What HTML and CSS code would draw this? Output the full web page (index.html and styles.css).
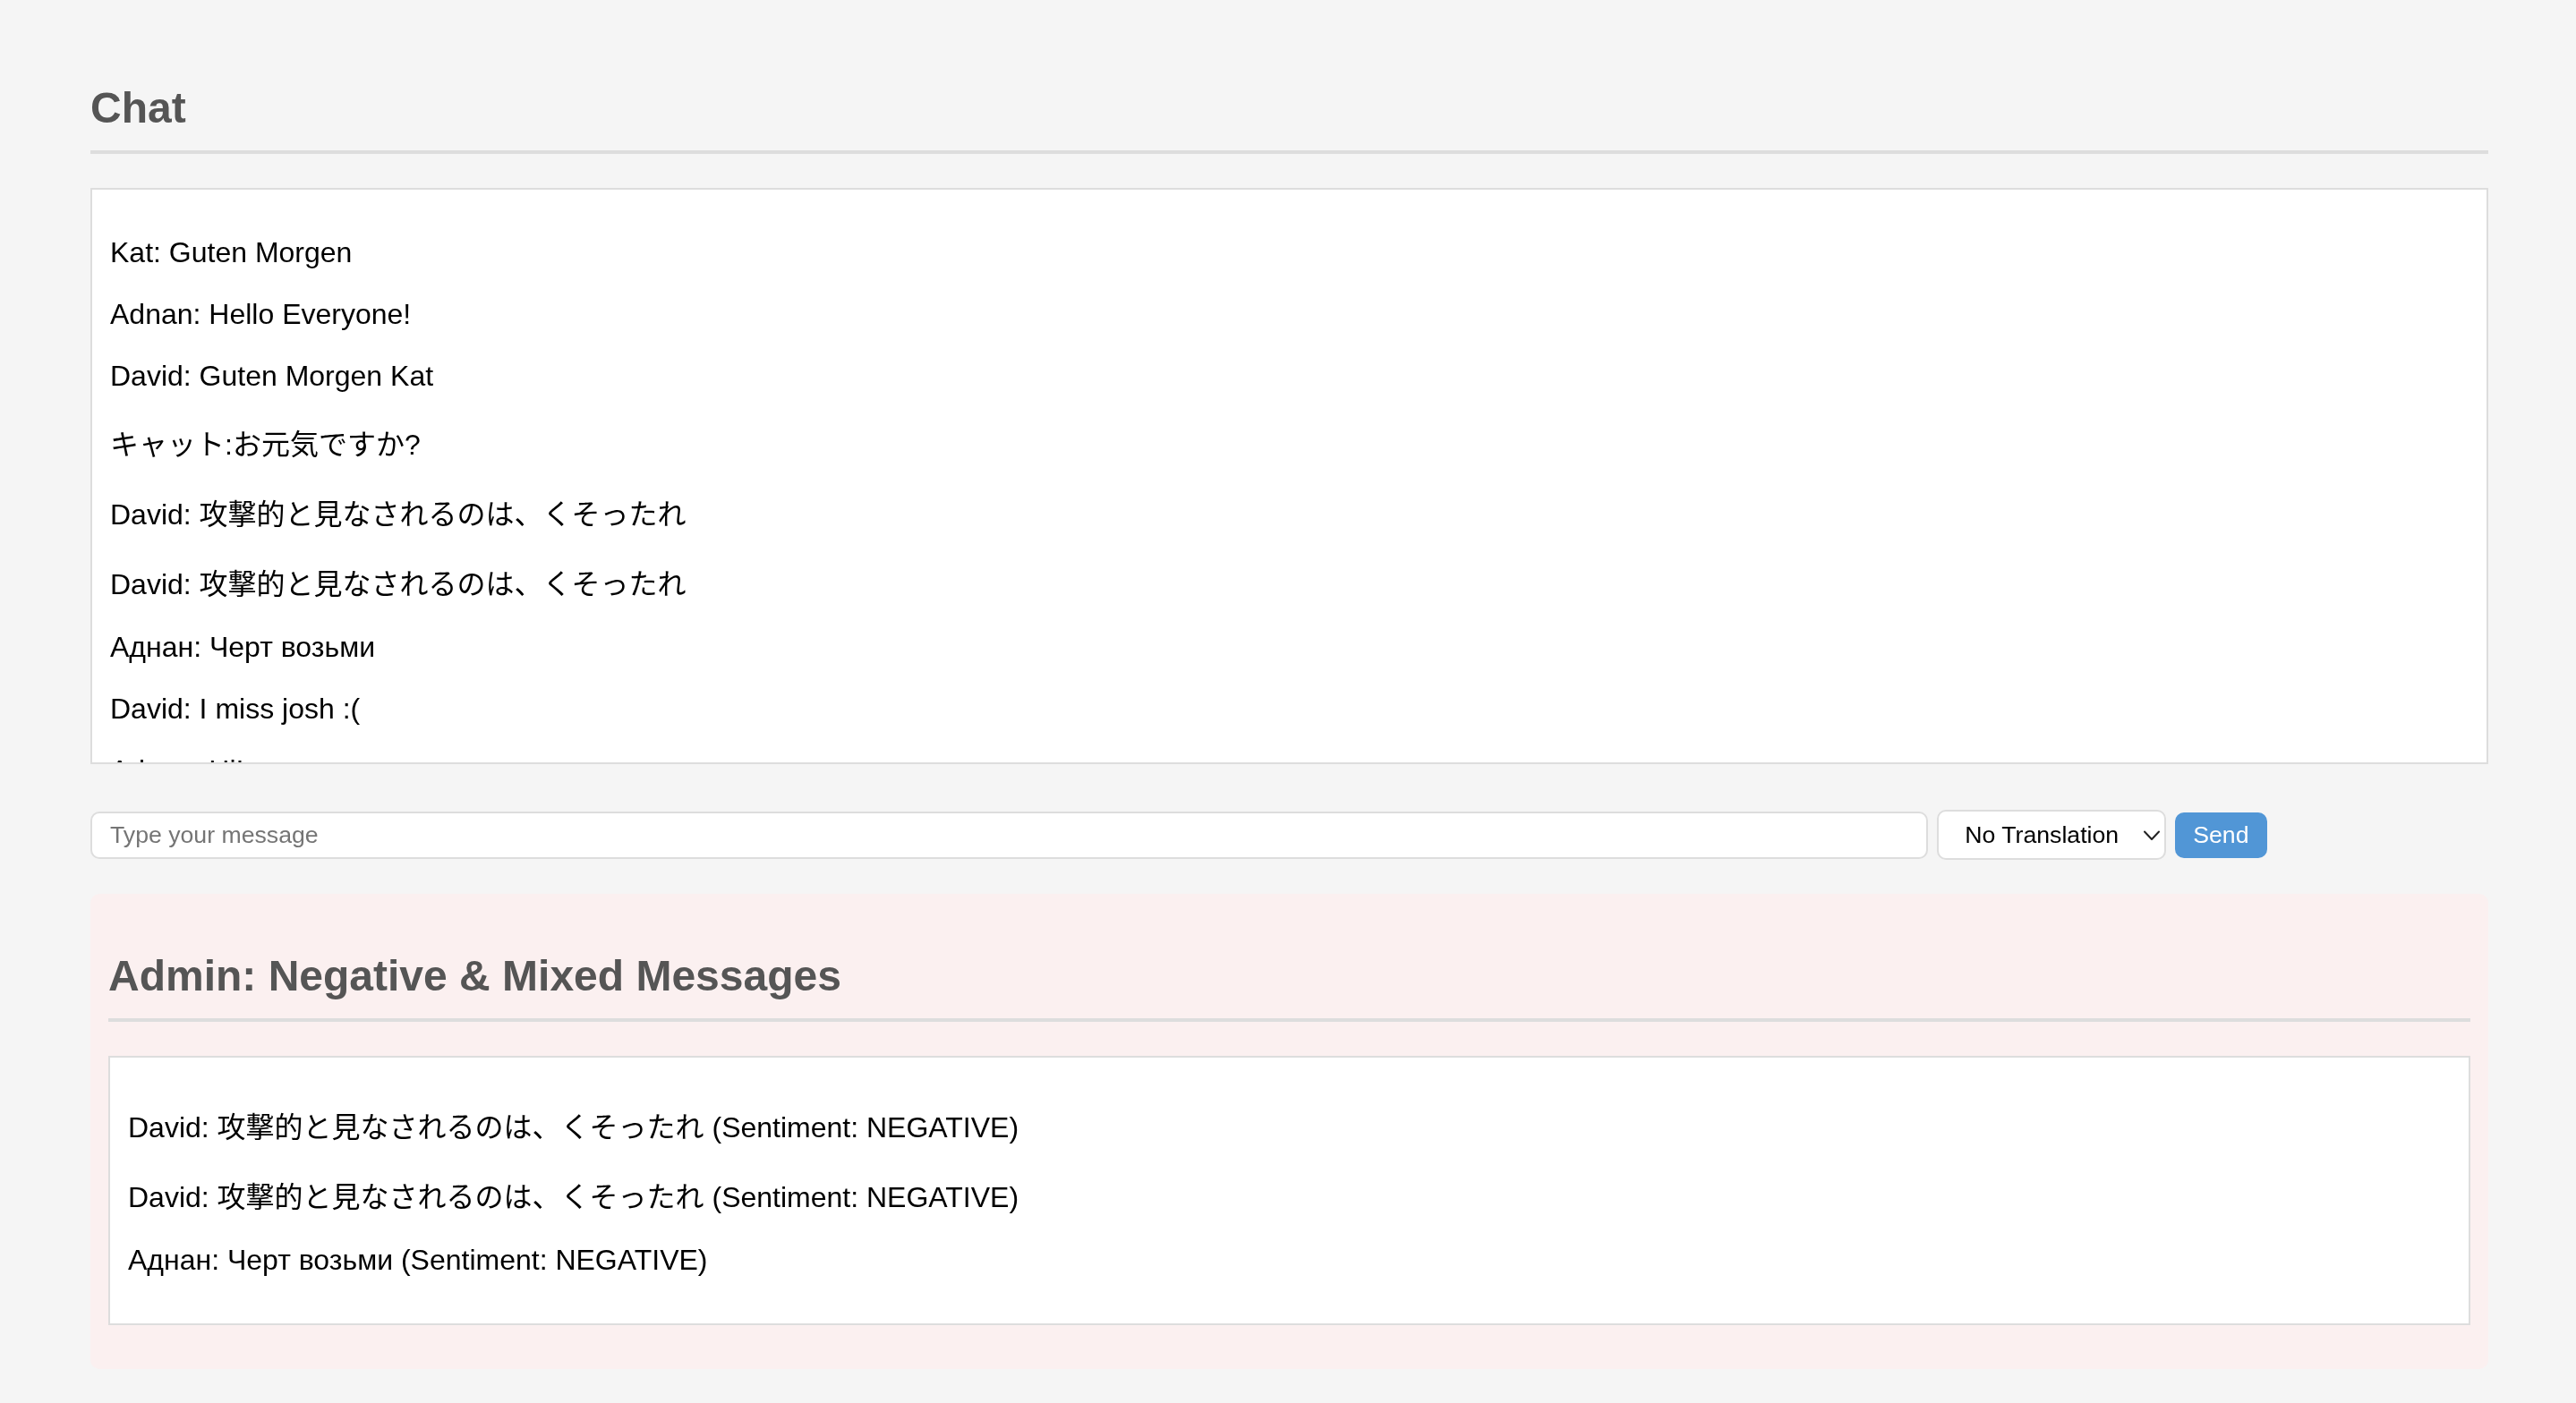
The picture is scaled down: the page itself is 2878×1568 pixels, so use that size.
FILE: index.html
```html
<!DOCTYPE html>
<html lang="en">
<head>
<meta charset="utf-8">
<title>Chat</title>
<link rel="stylesheet" href="styles.css">
</head>
<body>
  <main class="page">
    <h2 class="section-title">Chat</h2>
    <div class="chat-box">
      <p>Kat: Guten Morgen</p>
      <p>Adnan: Hello Everyone!</p>
      <p>David: Guten Morgen Kat</p>
      <p>キャット:お元気ですか?</p>
      <p>David: 攻撃的と見なされるのは、くそったれ</p>
      <p>David: 攻撃的と見なされるのは、くそったれ</p>
      <p>Аднан: Черт возьми</p>
      <p>David: I miss josh :(</p>
      <p>Adnan: Hi!</p>
    </div>

    <div class="composer">
      <input class="message-input" type="text" placeholder="Type your message">
      <div class="select-wrap">
        <select class="lang-select">
          <option>No Translation</option>
          <option>English</option>
          <option>German</option>
          <option>Japanese</option>
          <option>Russian</option>
        </select>
        <svg class="select-chevron" width="18" height="12" viewBox="0 0 18 12" aria-hidden="true">
          <path d="M1 1.5 L9 10 L17 1.5" fill="none" stroke="#222" stroke-width="2" stroke-linecap="round" stroke-linejoin="round"/>
        </svg>
      </div>
      <button class="send-btn" type="button">Send</button>
    </div>

    <section class="admin">
      <h2 class="section-title">Admin: Negative &amp; Mixed Messages</h2>
      <div class="admin-box">
        <p>David: 攻撃的と見なされるのは、くそったれ (Sentiment: NEGATIVE)</p>
        <p>David: 攻撃的と見なされるのは、くそったれ (Sentiment: NEGATIVE)</p>
        <p>Аднан: Черт возьми (Sentiment: NEGATIVE)</p>
      </div>
    </section>
  </main>
</body>
</html>
```

FILE: styles.css
```css
html, body {
  margin: 0;
  padding: 0;
  background: #f5f5f5;
}

body {
  font-family: "Liberation Sans", "Noto Sans CJK JP", Arial, sans-serif;
  font-size: 32px;
  color: #000;
}

.page {
  padding: 93px 98px 36px 101px;
}

.section-title {
  margin: 0 0 38px 0;
  padding-bottom: 20px;
  border-bottom: 4px solid #ddd;
  font-size: 48px;
  font-weight: bold;
  color: #555;
  line-height: normal;
}

.chat-box {
  height: 600px;
  padding: 20px;
  background: #fff;
  border: 2px solid #ddd;
  overflow-y: auto;
  scrollbar-width: none;
}

.chat-box::-webkit-scrollbar {
  display: none;
}

.chat-box p,
.admin-box p {
  margin: 32px 0;
  line-height: normal;
}

.composer {
  display: flex;
  align-items: center;
  gap: 10px;
  margin-top: 51px;
}

.message-input {
  width: 75%;
  height: 49px;
  padding: 0 20px;
  border: 2px solid #ddd;
  border-radius: 10px;
  background: #fff;
  font-family: "Liberation Sans", Arial, sans-serif;
  font-size: 26.67px;
  color: #000;
  outline: none;
  flex: none;
}

.message-input::placeholder {
  color: #757575;
}

.select-wrap {
  position: relative;
  flex: none;
}

.lang-select {
  display: block;
  width: 256px;
  height: 56px;
  padding: 0 40px 0 29px;
  border: 2px solid #ddd;
  border-radius: 10px;
  background: #fff;
  font-family: "Liberation Sans", Arial, sans-serif;
  font-size: 26.67px;
  color: #000;
  -webkit-appearance: none;
  appearance: none;
  outline: none;
}

.select-chevron {
  position: absolute;
  right: 7px;
  top: 23px;
  pointer-events: none;
}

.send-btn {
  flex: none;
  height: 51px;
  padding: 0 20px;
  border: none;
  border-radius: 10px;
  background: #5196d6;
  color: #fff;
  font-family: "Liberation Sans", Arial, sans-serif;
  font-size: 26.67px;
  cursor: pointer;
}

.admin {
  margin-top: 38px;
  padding: 20px 20px 49px 20px;
  background: #fbf0f0;
  border-radius: 10px;
}

.admin .section-title {
  margin-top: 44px;
}

.admin-box {
  padding: 20px;
  background: #fff;
  border: 2px solid #ddd;
}
```
